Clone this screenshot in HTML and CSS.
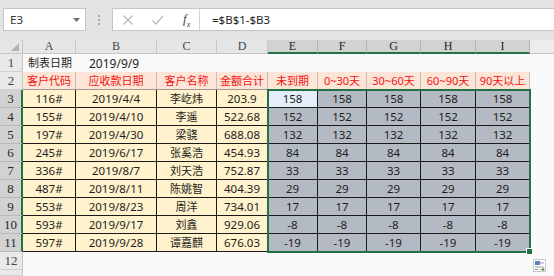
FILE: index.html
```html
<!DOCTYPE html>
<html lang="zh">
<head>
    <meta charset="UTF-8">
    <meta name="viewport" content="width=device-width, initial-scale=1.0">
    <title>应收账款账龄</title>
    <link rel="stylesheet" href="styles.css">
</head>
<body>
    <div class="toolbar">
        <div class="namebox">
            <span>E3</span>
            <svg class="drop" width="7" height="4" viewBox="0 0 7 4"><path d="M0 0h7L3.5 4z" fill="#707070"/></svg>
        </div>
        <div class="grip"><i></i><i></i><i></i></div>
        <div class="fbar">
            <div class="fbtns">
                <svg width="12" height="12" viewBox="0 0 12 12"><path d="M1.5 1.5l9 9M10.5 1.5l-9 9" stroke="#b8b8b8" stroke-width="1.2"/></svg>
                <svg width="13" height="12" viewBox="0 0 13 12"><path d="M1.5 6.5l3.5 3.5 7-8" stroke="#b8b8b8" stroke-width="1.2" fill="none"/></svg>
                <span class="fx">f<sub>x</sub></span>
            </div>
            <div class="formula">=$B$1-$B3</div>
        </div>
    </div>

    <div class="sheet">
        <!-- column headers -->
        <div class="corner"><svg width="8" height="8" viewBox="0 0 8 8"><path d="M8 0v8H0z" fill="#b4b4b4"/></svg></div>
        <div class="colhead">A</div>
        <div class="colhead">B</div>
        <div class="colhead">C</div>
        <div class="colhead">D</div>
        <div class="colhead sel">E</div>
        <div class="colhead sel">F</div>
        <div class="colhead sel">G</div>
        <div class="colhead sel">H</div>
        <div class="colhead sel">I</div>
        <div class="colhead blank"></div>

        <!-- row 1 -->
        <div class="rowhead">1</div>
        <div class="cell plain zh">制表日期</div>
        <div class="cell plain date">2019/9/9</div>
        <div class="cell plain"></div><div class="cell plain"></div><div class="cell plain"></div><div class="cell plain"></div>
        <div class="cell plain"></div><div class="cell plain"></div><div class="cell plain"></div><div class="cell plain"></div>

        <!-- row 2 -->
        <div class="rowhead">2</div>
        <div class="cell title">客户代码</div>
        <div class="cell title">应收款日期</div>
        <div class="cell title">客户名称</div>
        <div class="cell title">金额合计</div>
        <div class="cell title">未到期</div>
        <div class="cell title">0~30天</div>
        <div class="cell title">30~60天</div>
        <div class="cell title">60~90天</div>
        <div class="cell title">90天以上</div>
        <div class="cell plain"></div>

        <div class="rowhead sel">3</div>
        <div class="cell data">116#</div><div class="cell data">2019/4/4</div><div class="cell data zh">李屹炜</div><div class="cell data">203.9</div>
        <div class="cell calc active">158</div><div class="cell calc">158</div><div class="cell calc">158</div><div class="cell calc">158</div><div class="cell calc">158</div>
        <div class="cell plain"></div>

        <div class="rowhead sel">4</div>
        <div class="cell data">155#</div><div class="cell data">2019/4/10</div><div class="cell data zh">李遥</div><div class="cell data">522.68</div>
        <div class="cell calc">152</div><div class="cell calc">152</div><div class="cell calc">152</div><div class="cell calc">152</div><div class="cell calc">152</div>
        <div class="cell plain"></div>

        <div class="rowhead sel">5</div>
        <div class="cell data">197#</div><div class="cell data">2019/4/30</div><div class="cell data zh">梁骁</div><div class="cell data">688.08</div>
        <div class="cell calc">132</div><div class="cell calc">132</div><div class="cell calc">132</div><div class="cell calc">132</div><div class="cell calc">132</div>
        <div class="cell plain"></div>

        <div class="rowhead sel">6</div>
        <div class="cell data">245#</div><div class="cell data">2019/6/17</div><div class="cell data zh">张奚浩</div><div class="cell data">454.93</div>
        <div class="cell calc">84</div><div class="cell calc">84</div><div class="cell calc">84</div><div class="cell calc">84</div><div class="cell calc">84</div>
        <div class="cell plain"></div>

        <div class="rowhead sel">7</div>
        <div class="cell data">336#</div><div class="cell data">2019/8/7</div><div class="cell data zh">刘天浩</div><div class="cell data">752.87</div>
        <div class="cell calc">33</div><div class="cell calc">33</div><div class="cell calc">33</div><div class="cell calc">33</div><div class="cell calc">33</div>
        <div class="cell plain"></div>

        <div class="rowhead sel">8</div>
        <div class="cell data">487#</div><div class="cell data">2019/8/11</div><div class="cell data zh">陈姚智</div><div class="cell data">404.39</div>
        <div class="cell calc">29</div><div class="cell calc">29</div><div class="cell calc">29</div><div class="cell calc">29</div><div class="cell calc">29</div>
        <div class="cell plain"></div>

        <div class="rowhead sel">9</div>
        <div class="cell data">553#</div><div class="cell data">2019/8/23</div><div class="cell data zh">周洋</div><div class="cell data">734.01</div>
        <div class="cell calc">17</div><div class="cell calc">17</div><div class="cell calc">17</div><div class="cell calc">17</div><div class="cell calc">17</div>
        <div class="cell plain"></div>

        <div class="rowhead sel">10</div>
        <div class="cell data">593#</div><div class="cell data">2019/9/17</div><div class="cell data zh">刘鑫</div><div class="cell data">929.06</div>
        <div class="cell calc">-8</div><div class="cell calc">-8</div><div class="cell calc">-8</div><div class="cell calc">-8</div><div class="cell calc">-8</div>
        <div class="cell plain"></div>

        <div class="rowhead sel">11</div>
        <div class="cell data">597#</div><div class="cell data">2019/9/28</div><div class="cell data zh">谭嘉麒</div><div class="cell data">676.03</div>
        <div class="cell calc">-19</div><div class="cell calc">-19</div><div class="cell calc">-19</div><div class="cell calc">-19</div><div class="cell calc">-19</div>
        <div class="cell plain"></div>

        <div class="rowhead">12</div>
        <div class="cell plain wide"></div>

        <div class="rowhead"></div>
        <div class="cell plain wide"></div>

        <!-- selection outline over E3:I11 -->
        <div class="selection"><span class="handle"></span></div>
        <div class="quick">
            <svg width="13" height="13" viewBox="0 0 13 13">
                <rect x="0.5" y="0.5" width="12" height="12" fill="#fff" stroke="#c8c8c8"/>
                <rect x="2" y="2" width="5" height="4" fill="#5b7fc4"/>
                <path d="M7 4h4M2 8h9M2 10.5h3M7 10.5h1" stroke="#9a9a9a" stroke-width="1"/>
                <path d="M10 9v3M8.5 10.5h3" stroke="#4a7d3a" stroke-width="1"/>
            </svg>
        </div>
    </div>
</body>
</html>
```

FILE: styles.css
```css
body {
    margin: 0;
    padding: 0;
    width: 554px;
    height: 276px;
    overflow: hidden;
    background-color: #fafafa;
    font-family: "Noto Sans", "Noto Sans CJK SC", sans-serif;
    color: #1e1e1e;
}

.toolbar {
    height: 40px;
    box-sizing: border-box;
    padding: 8px 0 9px 3px;
    display: flex;
    align-items: stretch;
    background-color: #e3e3e3;
}

.namebox {
    width: 83px;
    box-sizing: border-box;
    border: 1px solid #c6c6c6;
    background-color: #fff;
    display: flex;
    align-items: center;
    justify-content: space-between;
    padding: 0 5px 0 6px;
    font-size: 11.5px;
    color: #333;
}

.grip {
    width: 26px;
    display: flex;
    flex-direction: column;
    align-items: center;
    justify-content: center;
    gap: 2px;
}

.grip i {
    width: 2px;
    height: 2px;
    background-color: #a8a8a8;
}

.fbar {
    flex: 1;
    display: flex;
    border: 1px solid #c6c6c6;
    border-right: none;
    background-color: #fff;
}

.fbtns {
    width: 87px;
    display: flex;
    align-items: center;
    gap: 17px;
    padding-left: 9px;
    box-sizing: border-box;
    border-right: 1px solid #d4d4d4;
}

.fx {
    font-family: "Liberation Serif", serif;
    font-style: italic;
    font-size: 13px;
    color: #444;
    margin-left: 2px;
}

.fx sub {
    font-size: 8px;
}

.formula {
    padding-left: 12px;
    display: flex;
    align-items: center;
    font-size: 11.5px;
    color: #222;
}

.sheet {
    position: relative;
    display: grid;
    grid-template-columns: 23px 53px 81px 60px 51px 50px 49px 54px 55px 54px 1fr;
    grid-template-rows: 14px 18px 18px repeat(9, 18px) 18px 1fr;
    height: 236px;
}

.corner {
    background-color: #e6e6e6;
    border-right: 1px solid #c6c6c6;
    border-bottom: 1px solid #c6c6c6;
    display: flex;
    align-items: flex-end;
    justify-content: flex-end;
    padding: 0 3px 2px 0;
}

.colhead {
    background-color: #e6e6e6;
    border-right: 1px solid #c6c6c6;
    border-bottom: 1px solid #c6c6c6;
    font-family: "Liberation Serif", serif;
    font-size: 12px;
    line-height: 13px;
    text-align: center;
    color: #444;
}

.colhead.sel {
    background-color: #d2d2d2;
    border-right-color: #b4b4b4;
    border-bottom: 2px solid #217346;
    color: #262626;
}

.colhead.blank {
    border-right: none;
    background-color: #ececec;
}

.rowhead {
    background-color: #e9e9e9;
    border-right: 1px solid #c6c6c6;
    border-bottom: 1px solid #d0d0d0;
    font-family: "Liberation Serif", serif;
    font-size: 13px;
    line-height: 18px;
    text-align: center;
    color: #444;
}

.rowhead.sel {
    background-color: #d2d2d2;
    border-right: 2px solid #217346;
    border-bottom-color: #b8b8b8;
    color: #262626;
}

.cell {
    box-sizing: border-box;
    font-size: 11.5px;
    line-height: 17px;
    text-align: center;
    white-space: nowrap;
    overflow: hidden;
}

.zh {
    font-size: 11px;
}

.plain {
    background-color: #fafafa;
}

.plain.zh {
    text-align: left;
    padding-left: 5px;
    line-height: 18px;
}

.date {
    text-align: left;
    padding-left: 13px;
    font-size: 12px;
    line-height: 19px;
}

.wide {
    grid-column: 2 / 12;
}

.title {
    background-color: #fce4d6;
    color: #f31414;
    font-size: 11px;
    border-right: 1px solid #c9bdb8;
    border-bottom: 1px solid #a09896;
}

.data {
    background-color: #fff2cc;
    border-right: 1px solid #1a1a1a;
    border-bottom: 1px solid #1a1a1a;
}

.calc {
    background-color: #b4bac3;
    border-right: 1px solid #1a1a1a;
    border-bottom: 1px solid #1a1a1a;
}

.calc.active {
    background-color: #e4eefa;
}

/* absolutely positioned grid child: sits over the E3:I11 area without taking cells */
.selection {
    position: absolute;
    grid-column: 6 / 11;
    grid-row: 4 / 13;
    top: -1px;
    left: -1px;
    right: -1px;
    bottom: -1px;
    border: 2px solid #217346;
    pointer-events: none;
}

.handle {
    position: absolute;
    right: -4px;
    bottom: -4px;
    width: 5px;
    height: 5px;
    background-color: #217346;
    border: 1px solid #fff;
}

.quick {
    position: absolute;
    left: 533px;
    top: 215px;
}
```
